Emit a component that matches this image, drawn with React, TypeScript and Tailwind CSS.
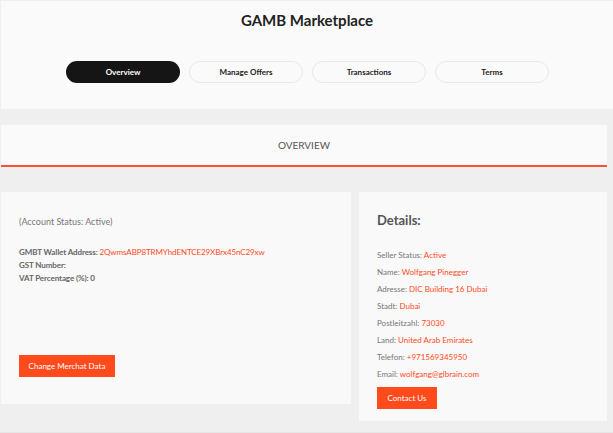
const tabs = ["Overview", "Manage Offers", "Transactions", "Terms"];

const details: [string, string][] = [
  ["Seller Status:", "Active"],
  ["Name:", "Wolfgang Pinegger"],
  ["Adresse:", "DIC Building 16 Dubai"],
  ["Stadt:", "Dubai"],
  ["Postleitzahl:", "73030"],
  ["Land:", "United Arab Emirates"],
  ["Telefon:", "+971569345950"],
  ["Email:", "wolfgang@glbrain.com"],
];

export default function App() {
  return (
    <main
      className="h-[433px] w-[613px] overflow-hidden border-b border-[#e6e6e6] bg-[#efefef] pl-px pr-[6px] pt-px text-[#666]"
      style={{ fontFamily: '"Lato", "Open Sans", sans-serif' }}
    >
      <header className="-mr-[6px] flex h-[108px] flex-col items-center bg-[#fafafa]">
        <h1 className="mt-[9px] text-[15px] font-bold leading-[20px] text-[#222]">GAMB Marketplace</h1>
        <nav className="mt-[31px] flex gap-[9px] pl-[1px]">
          {tabs.map((t, i) => (
            <button
              key={t}
              className={
                i === 0
                  ? "h-[22px] w-[114px] rounded-full bg-[#151515] text-[8px] font-bold text-white"
                  : "h-[22px] w-[114px] rounded-full border border-[#e8e8e8] bg-[#fafafa] text-[8px] font-bold text-[#222]"
              }
            >
              {t}
            </button>
          ))}
        </nav>
      </header>

      <section className="mt-[16px] flex h-[42px] items-center justify-center border-b-2 border-[#ff5233] bg-[#fafafa]">
        <span className="text-[10px] text-[#555]">OVERVIEW</span>
      </section>

      <div className="mt-[25px] flex items-start gap-[8px]">
        <div className="flex h-[212px] w-[350px] flex-col bg-[#f9f9f9] px-[18px] pt-[23px]">
          <p className="text-[9px] text-[#777]">(Account Status: Active)</p>
          <div className="mt-[17px] text-[8px] font-bold leading-[13px] tracking-[-0.1px] text-[#666]">
            <p>
              GMBT Wallet Address:{" "}
              <span className="font-normal text-[#ff4a1c]">2QwmsABP8TRMYhdENTCE29XBrx45nC29xw</span>
            </p>
            <p>GST Number:</p>
            <p>VAT Percentage (%): 0</p>
          </div>
          <button className="mt-[70px] h-[22px] w-[96px] bg-[#ff4a1c] text-[8px] text-white">
            Change Merchat Data
          </button>
        </div>

        <div className="flex h-[229px] flex-1 flex-col bg-[#f9f9f9] px-[18px] pt-[19px]">
          <h2 className="text-[13px] font-bold leading-[18px] text-[#555]">Details:</h2>
          <ul className="mt-[18px] flex flex-col text-[8px] leading-[17px]">
            {details.map(([k, v]) => (
              <li key={k}>
                <span className="text-[#777]">{k}</span>{" "}
                <span className="text-[#ff4a1c]">{v}</span>
              </li>
            ))}
          </ul>
          <button className="mt-[4px] h-[22px] w-[60px] bg-[#ff4a1c] text-[8px] text-white">Contact Us</button>
        </div>
      </div>
    </main>
  );
}
